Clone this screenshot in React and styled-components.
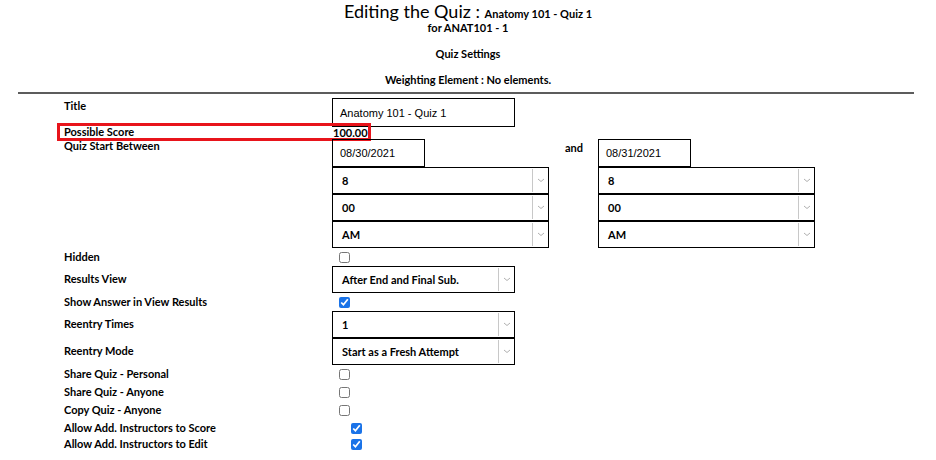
import React from "react";
import styled, { createGlobalStyle } from "styled-components";

const GlobalStyle = createGlobalStyle`
  body {
    margin: 0;
    background: #fff;
    color: #000;
    font-family: "Lato", "Noto Sans", sans-serif;
  }
`;

const Page = styled.div`
  width: 936px;
  height: 460px;
  overflow: hidden;
  box-sizing: border-box;
`;

const Header = styled.div`
  display: flex;
  flex-direction: column;
  align-items: center;
  padding-top: 3px;
  font-weight: 700;
  font-size: 11px;
`;

const Heading = styled.h1`
  margin: 0;
  font-size: 18px;
  font-weight: 400;
  line-height: 16px;

  span {
    font-size: 11px;
    font-weight: 700;
  }
`;

const SubLine = styled.div`
  line-height: 12px;
  margin-bottom: ${(p) => p.$gap || 0}px;
`;

const Rule = styled.hr`
  margin: 6px 22px 0 18px;
  border: none;
  border-top: 2px solid #5c5c5c;
  height: 0;
`;

const Form = styled.div`
  display: flex;
  flex-direction: column;
  padding: 4px 0 0 64px;
`;

const Row = styled.div`
  display: flex;
  align-items: flex-start;
  height: ${(p) => p.$h}px;
`;

const Label = styled.div`
  width: 268px;
  flex: none;
  font-size: 11px;
  font-weight: 700;
  line-height: 14px;
  padding-top: ${(p) => p.$top || 0}px;
`;

const Highlight = styled.div`
  display: flex;
  align-items: center;
  width: 314px;
  height: 18px;
  box-sizing: border-box;
  margin: -1px 0 0 -7px;
  padding-left: 4px;
  border: 3px solid #e8141b;
`;

const Score = styled.span`
  font-size: 11px;
  font-weight: 700;
  margin-left: 1px;
`;

const TextBox = styled.div`
  width: ${(p) => p.$w}px;
  height: ${(p) => p.$h}px;
  box-sizing: border-box;
  border: 1px solid #000;
  display: flex;
  align-items: center;
  padding-left: 7px;
  font-family: "Liberation Sans", Arial, sans-serif;
  font-size: 11px;
  flex: none;
`;

const SelectBox = styled.div`
  width: ${(p) => p.$w}px;
  height: 27px;
  box-sizing: border-box;
  border: 1px solid #000;
  display: flex;
  align-items: stretch;
  font-size: 11px;
  font-weight: 700;
`;

const SelectValue = styled.div`
  flex: 1;
  display: flex;
  align-items: center;
  padding-left: 9px;
`;

const Arrow = styled.div`
  width: 15px;
  margin: 1px 0;
  border-left: 1px solid #c8c8c8;
  display: flex;
  align-items: center;
  justify-content: center;
`;

const Stack = styled.div`
  display: flex;
  flex-direction: column;
`;

const Between = styled.div`
  display: flex;
  align-items: flex-start;
`;

const And = styled.div`
  width: 49px;
  padding: 2px 0 0 16px;
  box-sizing: border-box;
  font-size: 11px;
  font-weight: 700;
  line-height: 14px;
`;

const Check = styled.input.attrs({ type: "checkbox", readOnly: true })`
  width: 11px;
  height: 11px;
  margin: 4px 0 0 ${(p) => p.$left || 7}px;
  accent-color: #1a73e8;
`;

const Chevron = () => (
  <svg width="8" height="5" viewBox="0 0 8 5">
    <path d="M1 1l3 2.5L7 1" fill="none" stroke="#b0b0b0" strokeWidth="1" />
  </svg>
);

const Select = ({ value, w }) => (
  <SelectBox $w={w}>
    <SelectValue>{value}</SelectValue>
    <Arrow>
      <Chevron />
    </Arrow>
  </SelectBox>
);

const checks = [
  ["Share Quiz - Personal", false, 18, 7],
  ["Share Quiz - Anyone", false, 18, 7],
  ["Copy Quiz - Anyone", false, 18, 7],
  ["Allow Add. Instructors to Score", true, 16, 19],
  ["Allow Add. Instructors to Edit", true, 16, 19],
];

const DateTime = ({ date }) => (
  <Stack>
    <TextBox $w={93} $h={28}>
      {date}
    </TextBox>
    <Select value="8" w={217} />
    <Select value="00" w={217} />
    <Select value="AM" w={217} />
  </Stack>
);

export default function App() {
  return (
    <Page>
      <GlobalStyle />
      <Header>
        <Heading>
          Editing the Quiz : <span>Anatomy 101 - Quiz 1</span>
        </Heading>
        <SubLine $gap={14}>for ANAT101 - 1</SubLine>
        <SubLine $gap={14}>Quiz Settings</SubLine>
        <SubLine>Weighting Element : No elements.</SubLine>
      </Header>
      <Rule />
      <Form>
        <Row $h={26}>
          <Label $top={1}>Title</Label>
          <TextBox $w={183} $h={29}>
            Anatomy 101 - Quiz 1
          </TextBox>
        </Row>
        <Row $h={15}>
          <Highlight>
            <Label>Possible Score</Label>
            <Score>100.00</Score>
          </Highlight>
        </Row>
        <Row $h={109}>
          <Label>Quiz Start Between</Label>
          <Between>
            <DateTime date="08/30/2021" />
            <And>and</And>
            <DateTime date="08/31/2021" />
          </Between>
        </Row>
        <Row $h={18}>
          <Label $top={2}>Hidden</Label>
          <Check />
        </Row>
        <Row $h={27}>
          <Label $top={6}>Results View</Label>
          <Select value="After End and Final Sub." w={183} />
        </Row>
        <Row $h={18}>
          <Label $top={2}>Show Answer in View Results</Label>
          <Check defaultChecked />
        </Row>
        <Row $h={27}>
          <Label $top={6}>Reentry Times</Label>
          <Select value="1" w={183} />
        </Row>
        <Row $h={27}>
          <Label $top={6}>Reentry Mode</Label>
          <Select value="Start as a Fresh Attempt" w={183} />
        </Row>
        {checks.map(([label, on, h, left]) => (
          <Row key={label} $h={h}>
            <Label $top={2}>{label}</Label>
            <Check defaultChecked={on} $left={left} />
          </Row>
        ))}
      </Form>
    </Page>
  );
}
